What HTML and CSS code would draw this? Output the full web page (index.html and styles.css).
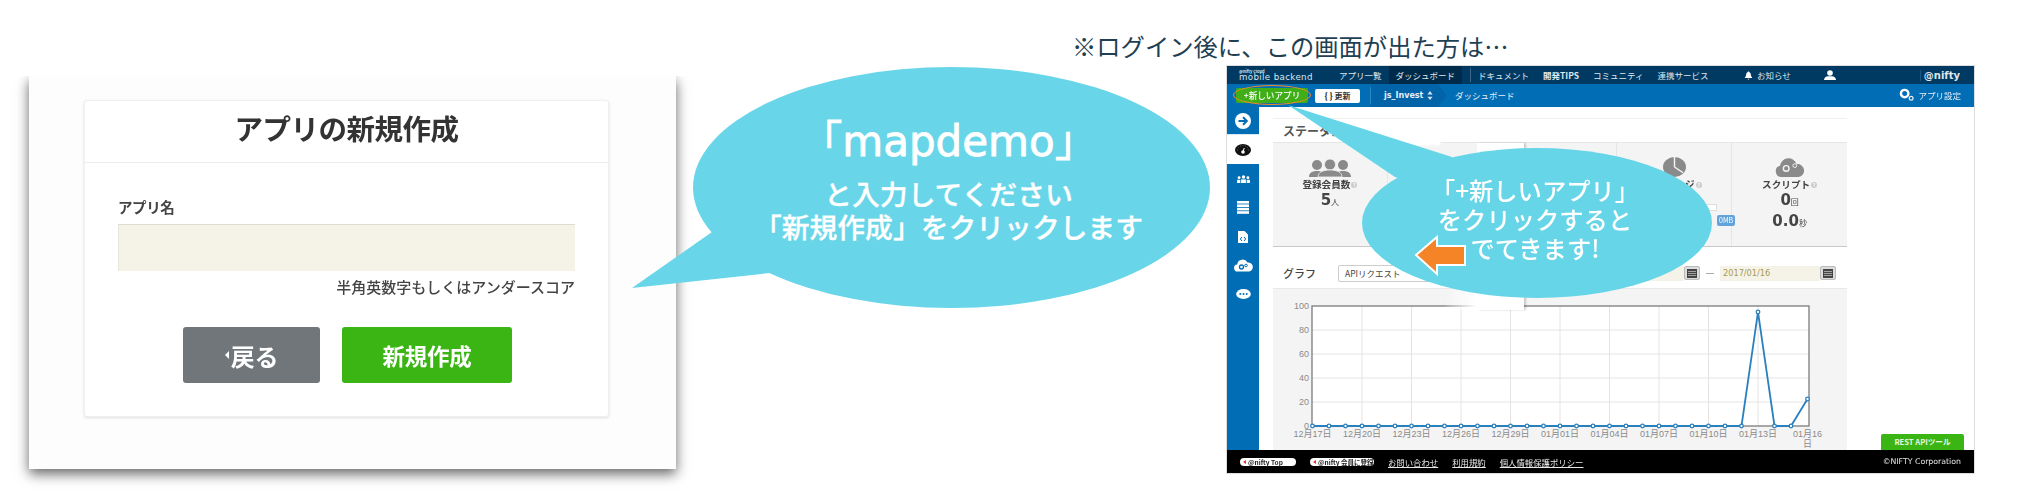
FILE: index.html
```html
<!DOCTYPE html>
<html lang="ja">
<head>
<meta charset="utf-8">
<title>アプリの新規作成</title>
<link rel="stylesheet" href="styles.css">
</head>
<body>
<div class="slide">

  <section class="form-window">
    <div class="form-card">
      <h1 class="form-title">アプリの新規作成</h1>
      <div class="form-body">
        <label class="form-label">アプリ名</label>
        <div class="form-input"></div>
        <p class="form-hint">半角英数字もしくはアンダースコア</p>
        <div class="form-actions">
          <span class="btn btn-back"><span class="btn-caret"></span><span class="btn-back-text">戻る</span></span>
          <span class="btn btn-create">新規作成</span>
        </div>
      </div>
    </div>
  </section>

  <div class="bubble bubble-map">
    <svg class="bubble-shape" viewBox="0 0 578 241" width="578" height="241">
      <ellipse cx="319.5" cy="120.5" rx="258.5" ry="120.5" fill="#68d6e8"/>
      <polygon points="0,221 80,165 200,120 138,206" fill="#68d6e8"/>
    </svg>
    <div class="bubble-map-text">
      <div class="map-name">「mapdemo」</div>
      <div class="map-line">と入力してください</div>
      <div class="map-line">「新規作成」をクリックします</div>
    </div>
  </div>

  <p class="note">※ログイン後に、この画面が出た方は…</p>

  <section class="screen">
    <header class="topnav">
      <div class="logo"><span class="logo-small">@nifty Cloud</span><span class="logo-main">mobile backend</span></div>
      <nav class="nav-items">
        <span class="nav-item">アプリ一覧</span>
        <span class="nav-item nav-active">ダッシュボード</span>
        <span class="nav-sep"></span>
        <span class="nav-item">ドキュメント</span>
        <span class="nav-item nav-bold">開発TIPS</span>
        <span class="nav-item">コミュニティ</span>
        <span class="nav-item">連携サービス</span>
      </nav>
      <div class="nav-right">
        <svg class="ico-bell" viewBox="0 0 10 10" width="9" height="9"><path d="M5 .5c.7 0 1 .5 1 1 1.4.5 1.6 2 1.7 3.300.1 1 .7 1.700 1.300 2.400v.6H1v-.6c.6-.7 1.200-1.400 1.300-2.400.1-1.300.3-2.800 1.700-3.300 0-.5.300-1 1-1zM4 8.700h2c0 .5-.4.9-1 .9s-1-.4-1-.9z" fill="#fff"/></svg>
        <span class="nav-notice">お知らせ</span>
        <svg class="ico-user" viewBox="0 0 12 10" width="12" height="10"><circle cx="6" cy="3" r="2.800" fill="#fff"/><path d="M0 10c0-2.500 2-3.500 4-3.800h4c2 .3 4 1.300 4 3.800z" fill="#fff"/></svg>
        <span class="nav-brand">@nifty</span>
      </div>
    </header>

    <div class="subnav">
      <span class="new-app">+新しいアプリ<span class="new-app-ring"></span></span>
      <span class="refresh"><b>{ }</b> 更新</span>
      <span class="sub-sep"></span>
      <span class="crumb-app">js_Invest <svg viewBox="0 0 8 12" width="6" height="9"><path d="M4 0l3.500 4.500h-7zM4 12L.5 7.500h7z" fill="#cfe0ee"/></svg></span>
      <span class="crumb">ダッシュボード</span>
      <span class="app-settings">
        <svg viewBox="0 0 16 14" width="15" height="13"><circle cx="6" cy="6" r="4" fill="none" stroke="#fff" stroke-width="2.600"/><circle cx="13" cy="11" r="2" fill="none" stroke="#dfe9f2" stroke-width="1.400"/></svg>
        アプリ設定
      </span>
    </div>

    <div class="workspace">
      <aside class="sidebar">
        <div class="side-cell side-first">
          <svg viewBox="0 0 16 16" width="16" height="16"><circle cx="8" cy="8" r="8" fill="#fff"/><path d="M3.500 8h8M8 4.300L11.800 8 8 11.700" fill="none" stroke="#016db5" stroke-width="2"/></svg>
        </div>
        <div class="side-cell side-active">
          <svg viewBox="0 0 16 12" width="16" height="12"><ellipse cx="8" cy="6" rx="8" ry="6" fill="#111"/><circle cx="8" cy="8" r="1.800" fill="#fff"/><path d="M8 8l1.200-4" stroke="#fff"/><path d="M2.500 6.500a5.500 5 0 0 1 11 0" fill="none" stroke="#777" stroke-width=".8" stroke-dasharray="1 1.500"/></svg>
        </div>
        <div class="side-cell">
          <svg viewBox="0 0 17 10" width="17" height="8" fill="#fff"><circle cx="8.500" cy="2.500" r="2.200"/><circle cx="3" cy="3.500" r="1.800"/><circle cx="14" cy="3.500" r="1.800"/><rect x="5.500" y="5.500" width="6" height="4.500"/><rect x=".5" y="6" width="4" height="4"/><rect x="12.500" y="6" width="4" height="4"/></svg>
        </div>
        <div class="side-cell">
          <svg viewBox="0 0 12 13" width="12" height="13" fill="#fff"><rect width="12" height="2.600"/><rect y="3.400" width="12" height="2.600"/><rect y="6.800" width="12" height="2.600"/><rect y="10.200" width="12" height="2.600"/></svg>
        </div>
        <div class="side-cell">
          <svg viewBox="0 0 10 12" width="10" height="12"><path d="M0 0h6.500L10 3.500V12H0z" fill="#fff"/><path d="M4 6L2.300 8 4 10M6 6l1.700 2L6 10" fill="none" stroke="#016db5"/></svg>
        </div>
        <div class="side-cell">
          <svg viewBox="0 0 19 12" width="19" height="13"><path d="M4 12a3.500 3.500 0 0 1-.8-7A5.500 5.500 0 0 1 13.500 3 4.500 4.500 0 0 1 15 12z" fill="#fff"/><circle cx="7.500" cy="7.500" r="2" fill="none" stroke="#016db5" stroke-width="1.300"/><circle cx="12" cy="6" r="1.300" fill="none" stroke="#016db5"/></svg>
        </div>
        <div class="side-cell">
          <svg viewBox="0 0 16 12" width="15" height="11"><ellipse cx="8" cy="5.500" rx="8" ry="5.500" fill="#fff"/><circle cx="4.500" cy="5.500" r="1.100" fill="#016db5"/><circle cx="8" cy="5.500" r="1.100" fill="#016db5"/><circle cx="11.500" cy="5.500" r="1.100" fill="#016db5"/></svg>
        </div>
      </aside>

      <main class="content">
        <div class="cards">
          <section class="panel stats">
            <h2 class="panel-head">ステータス</h2>
            <div class="stat-grid">
              <div class="stat">
                <div class="stat-ico"><svg viewBox="0 0 42 18" width="42" height="18" fill="#8a8a8a"><circle cx="8" cy="6" r="5"/><circle cx="34" cy="6" r="5"/><path d="M0 18c0-4 3-6 8-6s8 2 8 6zM26 18c0-4 3-6 8-6s8 2 8 6z"/><circle cx="21" cy="5.500" r="5.500" stroke="#f4f4f4" stroke-width=".8"/><path d="M9 18c0-5 5-7 12-7s12 2 12 7z" stroke="#f4f4f4" stroke-width=".8"/></svg></div>
                <div class="stat-label">登録会員数<i class="help">?</i></div>
                <div class="stat-value">5<small>人</small></div>
              </div>
              <div class="stat"></div>
              <div class="stat"></div>
              <div class="stat">
                <div class="stat-ico"><svg viewBox="0 0 24 24" width="23" height="20" preserveAspectRatio="none"><circle cx="12" cy="12" r="12" fill="#8a8a8a"/><path d="M12 12V0M12 12l9 7" stroke="#f4f4f4" stroke-width="1.500" fill="none"/></svg></div>
                <div class="stat-label">ストレージ<i class="help">?</i></div>
                <div class="usage-bar"></div>
                <div class="usage-badge">0MB</div>
              </div>
              <div class="stat">
                <div class="stat-ico"><svg viewBox="0 0 32 20" width="32" height="19"><path d="M7 20a6 6 0 0 1-1.500-11.800A9 9 0 0 1 23 6.500 6.800 6.800 0 0 1 25 20z" fill="#8a8a8a"/><circle cx="12" cy="11" r="3" fill="none" stroke="#f4f4f4" stroke-width="1.500"/><circle cx="21" cy="8" r="2" fill="none" stroke="#f4f4f4"/></svg></div>
                <div class="stat-label">スクリプト<i class="help">?</i></div>
                <div class="stat-value">0<small>回</small></div>
                <div class="stat-value">0.0<small>秒</small></div>
              </div>
            </div>
          </section>

          <section class="panel graph">
            <div class="graph-head">
              <h2 class="graph-title">グラフ</h2>
              <span class="graph-select">APIリクエスト</span>
              <span class="graph-dates">
                <span class="date-field"></span>
                <span class="cal"><svg viewBox="0 0 10 10" width="10" height="10"><path d="M0 1h10v9H0z" fill="#444"/><path d="M1 3.500h8M1 5.500h8M1 7.500h8" stroke="#ccc" stroke-width=".7"/></svg></span>
                <span class="date-dash"></span>
                <span class="date-field date-to">2017/01/16</span>
                <span class="cal"><svg viewBox="0 0 10 10" width="10" height="10"><path d="M0 1h10v9H0z" fill="#444"/><path d="M1 3.500h8M1 5.500h8M1 7.500h8" stroke="#ccc" stroke-width=".7"/></svg></span>
              </span>
            </div>
            <div class="graph-body">
              <svg class="chart" viewBox="0 0 574 161" width="574" height="161">
                <rect x="39" y="17" width="497" height="120" fill="#fff"/>
                <g stroke="#e4e4e4" fill="none">
                  <path d="M39 41h497M39 65h497M39 89h497M39 113h497"/>
                  <path d="M89 17v120M138.500 17v120M188 17v120M237.500 17v120M287 17v120M336.500 17v120M386 17v120M435.500 17v120M485 17v120"/>
                </g>
                <rect x="39" y="17" width="497" height="120" fill="none" stroke="#707070" stroke-width="1.200"/>
                <g class="chart-y" text-anchor="end">
                  <text x="36" y="20">100</text><text x="36" y="44">80</text><text x="36" y="68">60</text><text x="36" y="92">40</text><text x="36" y="116">20</text><text x="36" y="140">0</text>
                </g>
                <g class="chart-x" text-anchor="middle">
                  <text x="39.500" y="148">12月17日</text><text x="89" y="148">12月20日</text><text x="138.500" y="148">12月23日</text><text x="188" y="148">12月26日</text><text x="237.500" y="148">12月29日</text><text x="287" y="148">01月01日</text><text x="336.500" y="148">01月04日</text><text x="386" y="148">01月07日</text><text x="435.500" y="148">01月10日</text><text x="485" y="148">01月13日</text><text x="534.500" y="148">01月16</text><text x="534.500" y="158">日</text>
                </g>
                <polyline points="39.500,137 468.500,137 485,23 501.500,137 518,137 534.500,110" fill="none" stroke="#2a80bd" stroke-width="1.800"/>
                <g fill="#fff" stroke="#2a80bd" stroke-width="1.300">
                  <circle cx="39.500" cy="137" r="1.800"/><circle cx="56" cy="137" r="1.800"/><circle cx="72.500" cy="137" r="1.800"/><circle cx="89" cy="137" r="1.800"/><circle cx="105.500" cy="137" r="1.800"/><circle cx="122" cy="137" r="1.800"/><circle cx="138.500" cy="137" r="1.800"/><circle cx="155" cy="137" r="1.800"/><circle cx="171.500" cy="137" r="1.800"/><circle cx="188" cy="137" r="1.800"/><circle cx="204.500" cy="137" r="1.800"/><circle cx="221" cy="137" r="1.800"/><circle cx="237.500" cy="137" r="1.800"/><circle cx="254" cy="137" r="1.800"/><circle cx="270.500" cy="137" r="1.800"/><circle cx="287" cy="137" r="1.800"/><circle cx="303.500" cy="137" r="1.800"/><circle cx="320" cy="137" r="1.800"/><circle cx="336.500" cy="137" r="1.800"/><circle cx="353" cy="137" r="1.800"/><circle cx="369.500" cy="137" r="1.800"/><circle cx="386" cy="137" r="1.800"/><circle cx="402.500" cy="137" r="1.800"/><circle cx="419" cy="137" r="1.800"/><circle cx="435.500" cy="137" r="1.800"/><circle cx="452" cy="137" r="1.800"/><circle cx="468.500" cy="137" r="1.800"/><circle cx="485" cy="23" r="1.800"/><circle cx="501.500" cy="137" r="1.800"/><circle cx="518" cy="137" r="1.800"/><circle cx="534.500" cy="110" r="1.800"/>
                </g>
              </svg>
            </div>
          </section>
        </div>
        <div class="side-actions"><span class="rest-btn">REST APIツール</span></div>
      </main>
      <div class="patch patch-a"></div>
      <div class="patch patch-b"></div>
      <div class="patch patch-c"></div>
    </div>

    <footer class="footer">
      <span class="pill pill-top"><i></i>@nifty Top</span>
      <span class="pill pill-join"><i></i>@nifty 会員に登録</span>
      <a class="foot-link">お問い合わせ</a>
      <a class="foot-link">利用規約</a>
      <a class="foot-link">個人情報保護ポリシー</a>
      <span class="copyright">©NIFTY Corporation</span>
    </footer>
  </section>

  <div class="bubble bubble-new">
    <svg class="bubble-shape" viewBox="0 0 424 193" width="424" height="193">
      <ellipse cx="249" cy="118" rx="175" ry="75" fill="#66d5e8"/>
      <polygon points="0,0 164,52 200,100 107,72" fill="#66d5e8"/>
      <polygon points="128,150 149,132 149,141 177,141 177,160 149,160 149,169" fill="#f58426" stroke="#fff" stroke-width="2"/>
    </svg>
    <div class="bubble-new-text">
      <div>「+新しいアプリ」</div>
      <div>をクリックすると</div>
      <div>でてきます!</div>
    </div>
  </div>

</div>
</body>
</html>
```

FILE: styles.css
```css
* { box-sizing: border-box; }

html, body {
  margin: 0;
  padding: 0;
  background: #fff;
}

body {
  font-family: "Noto Sans CJK JP", "Liberation Sans", sans-serif;
  overflow: hidden;
}

.slide {
  position: relative;
  width: 2025px;
  height: 500px;
  overflow: hidden;
}

/* ---------- left window ---------- */
.form-window {
  position: absolute;
  left: 29px;
  top: 76px;
  width: 647px;
  height: 393px;
  padding: 24px 67px 0 55px;
  background: #fdfdfd;
  box-shadow: 0 5px 12px rgba(0, 0, 0, .6);
  clip-path: inset(0 -30px -30px -30px);
  filter: blur(.35px);
}

.form-card {
  height: 317px;
  background: #fff;
  border: 1px solid #f0f0f0;
  border-radius: 3px;
  box-shadow: 0 1px 3px rgba(0, 0, 0, .12);
}

.form-title {
  height: 62px;
  margin: 0;
  border-bottom: 1px solid #ececec;
  color: #333;
  font-size: 28.500px;
  font-weight: 700;
  line-height: 54px;
  letter-spacing: -.5px;
  text-align: center;
}

.form-body {
  display: flex;
  flex-direction: column;
  padding: 35px 33px 0 33px;
}

.form-label {
  color: #444;
  font-size: 14.500px;
  font-weight: 700;
  line-height: 18px;
  letter-spacing: -.4px;
}

.form-input {
  height: 47px;
  margin-top: 8px;
  background: #f5f3e7;
  border-top: 1px solid #dedcd2;
  border-left: 1px solid #e8e6dc;
}

.form-hint {
  margin: 5px 0 0;
  color: #444;
  font-size: 15px;
  font-weight: 500;
  line-height: 22px;
  text-align: right;
}

.form-actions {
  display: flex;
  gap: 22px;
  margin: 29px 0 0 65px;
}

.btn {
  display: flex;
  align-items: center;
  justify-content: center;
  height: 56px;
  border-radius: 3px;
  color: #fff;
  font-size: 22.500px;
  font-weight: 700;
  letter-spacing: -.3px;
}

.btn-back {
  width: 137px;
  background: #71767a;
}

.btn-back-text {
  font-size: 24px;
}

.btn-caret {
  width: 0;
  height: 0;
  margin-right: 2px;
  border-top: 4px solid transparent;
  border-bottom: 4px solid transparent;
  border-right: 4px solid #fff;
}

.btn-create {
  width: 170px;
  background: #3ab514;
}

/* ---------- speech bubbles ---------- */
.bubble {
  position: absolute;
  color: #fff;
}

.bubble-shape {
  display: block;
  position: absolute;
  left: 0;
  top: 0;
}

.bubble-map {
  left: 632px;
  top: 67px;
  width: 578px;
  height: 241px;
}

.bubble-map-text {
  position: absolute;
  left: 58px;
  top: 46px;
  width: 517px;
  text-align: center;
  font-weight: 700;
}

.map-name {
  font-family: "DejaVu Sans", "Noto Sans CJK JP", sans-serif;
  font-size: 42px;
  font-weight: 400;
  -webkit-text-stroke: .8px #fff;
  line-height: 58px;
  margin-bottom: 6px;
}

.map-line {
  font-size: 27.800px;
  font-weight: 500;
  -webkit-text-stroke: .3px #fff;
  line-height: 32.500px;
}

.bubble-new {
  left: 1288px;
  top: 105px;
  width: 424px;
  height: 193px;
}

.bubble-new-text {
  position: absolute;
  left: 72px;
  top: 70px;
  width: 350px;
  font-size: 24.300px;
  font-weight: 500;
  line-height: 29px;
  text-align: center;
}

/* ---------- note ---------- */
.note {
  position: absolute;
  left: 1072px;
  top: 28px;
  margin: 0;
  color: #1f4053;
  font-size: 24.300px;
  line-height: 36px;
  white-space: nowrap;
}

/* ---------- right screenshot ---------- */
.screen {
  position: absolute;
  left: 1227px;
  top: 66px;
  display: flex;
  flex-direction: column;
  width: 747px;
  height: 407px;
  background: #fff;
  outline: 1px solid #ddd;
  filter: blur(.55px);
  color: #444;
}

.topnav {
  display: flex;
  align-items: center;
  flex: 0 0 18px;
  padding: 0 14px 0 12px;
  background: #003a63;
  color: #dfe8ef;
  font-size: 8.500px;
}

.logo {
  display: flex;
  flex-direction: column;
  width: 71px;
  color: #dce6ee;
  line-height: 1;
}

.logo-small {
  font-size: 4px;
  font-weight: 700;
}

.logo-main {
  font-family: "DejaVu Sans", sans-serif;
  font-size: 8.700px;
  letter-spacing: .35px;
  white-space: nowrap;
}

.nav-items {
  display: flex;
  align-items: stretch;
  align-self: stretch;
  margin-left: 22px;
}

.nav-item {
  display: flex;
  align-items: center;
  padding: 0 7px;
  white-space: nowrap;
}

.nav-active {
  background: #002a4a;
}

.nav-bold {
  font-weight: 700;
}

.nav-sep {
  width: 1px;
  margin: 2px 0 2px 8px;
  background: #3d6a8c;
}

.nav-right {
  display: flex;
  align-items: center;
  margin-left: auto;
}

.nav-notice {
  margin: 0 33px 0 4px;
}

.nav-brand {
  margin-left: 84px;
  padding-left: 3px;
  border-left: 1px solid #1e5680;
  color: #dfe8ef;
  font-family: "DejaVu Sans", sans-serif;
  font-size: 10px;
  font-weight: 700;
}

.subnav {
  display: flex;
  align-items: center;
  flex: 0 0 23px;
  padding: 0 13px 0 9px;
  background: #016db5;
  color: #e4eef6;
  font-size: 8.500px;
}

.new-app {
  position: relative;
  width: 72px;
  height: 15px;
  background: #3fae18;
  border-radius: 2px;
  color: #fff;
  font-size: 8.600px;
  font-weight: 500;
  line-height: 15px;
  text-align: center;
  white-space: nowrap;
}

.new-app-ring {
  position: absolute;
  left: -3px;
  top: -3px;
  width: 78px;
  height: 20px;
  border: 1.500px solid #f08a24;
  border-radius: 50%;
}

.refresh {
  width: 45px;
  height: 14px;
  margin-left: 7px;
  background: #fff;
  border-radius: 2px;
  color: #333;
  font-size: 8px;
  font-weight: 700;
  line-height: 14px;
  text-align: center;
}

.sub-sep {
  align-self: stretch;
  width: 1px;
  margin: 3px 0 3px 10px;
  background: #2c86c2;
}

.crumb-app {
  display: flex;
  align-items: center;
  gap: 4px;
  height: 23px;
  width: 76px;
  padding-left: 13px;
  background: #0264a8;
  clip-path: polygon(0 0, 88% 0, 100% 50%, 88% 100%, 0 100%);
  color: #e4eef6;
  font-family: "DejaVu Sans", sans-serif;
  font-size: 8px;
  font-weight: 700;
  white-space: nowrap;
}

.crumb {
  margin: 0 0 2px 8px;
}

.app-settings {
  display: flex;
  align-items: center;
  gap: 4px;
  margin: 0 0 2px auto;
}

.workspace {
  position: relative;
  display: flex;
  flex: 1 1 auto;
  min-height: 0;
}

.sidebar {
  display: flex;
  flex-direction: column;
  flex: 0 0 32px;
  background: #016db5;
}

.side-cell {
  display: flex;
  align-items: center;
  justify-content: center;
  height: 29px;
}

.side-first {
  height: 28px;
  border-bottom: 1px solid #d8e8f3;
}

.side-active {
  background: #fff;
}

.content {
  display: flex;
  flex: 1 1 auto;
  min-width: 0;
  padding-left: 14px;
}

.cards {
  display: flex;
  flex-direction: column;
  flex: 0 0 574px;
  gap: 11px;
  padding-top: 11px;
}

.panel {
  background: #fff;
}

.stats {
  flex: 0 0 129px;
  display: flex;
  flex-direction: column;
  border-top: 1px solid #f0f0f0;
}

.panel-head {
  flex: 0 0 24px;
  margin: 0;
  padding-left: 10px;
  border-bottom: 1px solid #e6e6e6;
  color: #555;
  font-size: 12px;
  font-weight: 700;
  line-height: 23px;
}

.stat-grid {
  display: grid;
  flex: 1 1 auto;
  grid-template-columns: repeat(5, 1fr);
  background: #f4f4f4;
  border-bottom: 1px solid #c9c9c9;
}

.stat {
  display: flex;
  flex-direction: column;
  align-items: center;
  position: relative;
  padding-top: 14px;
  border-right: 1px solid #e6e6e6;
}

.stat:last-child {
  border-right: 0;
}

.stat-ico {
  display: flex;
  align-items: flex-end;
  height: 20px;
}

.stat-label {
  color: #444;
  font-size: 9.600px;
  font-weight: 700;
  line-height: 14px;
  white-space: nowrap;
}

.help {
  display: inline-block;
  width: 6px;
  height: 6px;
  margin-left: 1px;
  border-radius: 50%;
  background: #ccc;
  color: #fff;
  font-size: 5px;
  font-style: normal;
  line-height: 6px;
  text-align: center;
  vertical-align: middle;
}

.stat-value {
  color: #444;
  font-family: "DejaVu Sans", "Noto Sans CJK JP", sans-serif;
  font-size: 15px;
  font-weight: 700;
  line-height: 18px;
}

.stat-value small {
  font-size: 8px;
  font-weight: 400;
}

.usage-bar {
  width: 86px;
  height: 7px;
  margin-top: 13px;
  background: #fff;
  border: 1px solid #ddd;
}

.usage-badge {
  align-self: flex-end;
  height: 11px;
  margin: 4px -4px 0 0;
  padding: 0 2px;
  background: #62a3dc;
  border-radius: 2px;
  color: #fff;
  font-size: 7px;
  line-height: 11px;
}

.graph {
  display: flex;
  flex-direction: column;
  flex: 1 1 auto;
  min-height: 0;
}

.graph-head {
  display: flex;
  align-items: center;
  flex: 0 0 31px;
  padding: 0 11px 0 10px;
  border-bottom: 1px solid #e8e8e8;
}

.graph-title {
  width: 55px;
  margin: 0;
  color: #444;
  font-size: 11px;
  font-weight: 500;
}

.graph-select {
  width: 105px;
  height: 17px;
  padding-left: 6px;
  background: #fff;
  border: 1px solid #ccc;
  border-radius: 2px;
  color: #444;
  font-size: 8.500px;
  line-height: 15px;
}

.graph-dates {
  display: flex;
  align-items: center;
  margin-left: auto;
}

.date-field {
  display: block;
  width: 100px;
  height: 15px;
  padding-left: 3px;
  background: #f5f3e7;
  color: #a69a55;
  font-family: "DejaVu Sans", sans-serif;
  font-size: 8.200px;
  line-height: 15px;
}

.cal {
  display: flex;
  align-items: center;
  justify-content: center;
  width: 16px;
  height: 14px;
  background: #ddd;
  border: 1px solid #bbb;
  border-radius: 2px;
}

.date-dash {
  width: 8px;
  height: 1px;
  margin: 0 6px;
  background: #aaa;
}

.graph-body {
  flex: 1 1 auto;
  min-height: 0;
  background: #f4f4f4;
}

.chart {
  display: block;
}

.chart-y text,
.chart-x text {
  fill: #8a8a8a;
  font-family: "Liberation Sans", "Noto Sans CJK JP", sans-serif;
  font-size: 9px;
}

.side-actions {
  display: flex;
  flex: 1 1 auto;
  align-items: flex-end;
  justify-content: flex-start;
  padding-left: 34px;
}

.rest-btn {
  width: 83px;
  height: 16px;
  background: #3ab514;
  border-radius: 2px 2px 0 0;
  color: #e9f8e2;
  font-size: 7.600px;
  font-weight: 700;
  line-height: 16px;
  text-align: center;
  white-space: nowrap;
}

/* leftovers of the collage that sit behind the bubble */
.patch {
  position: absolute;
  background: #fff;
}

.patch-a {
  left: 250px;
  top: 36px;
  width: 47px;
  height: 167px;
  box-shadow: 2px 0 2px rgba(0, 0, 0, .18);
}

.patch-b {
  left: 153px;
  top: 26px;
  width: 60px;
  height: 12px;
  box-shadow: 0 0 4px #fff;
}

.patch-c {
  left: 216px;
  top: 183px;
  width: 34px;
  height: 20px;
  background: linear-gradient(to right, rgba(255, 255, 255, 0), #fff);
}

.footer {
  display: flex;
  align-items: center;
  flex: 0 0 23px;
  padding: 0 13px;
  background: #000;
  color: #e8e8e8;
  font-size: 8.400px;
}

.pill {
  display: flex;
  align-items: center;
  height: 8px;
  padding: 0 3px;
  background: #fff;
  border-radius: 4px;
  color: #222;
  font-size: 6.500px;
  font-weight: 700;
  white-space: nowrap;
}

.pill i {
  width: 0;
  height: 0;
  margin-right: 2px;
  border-top: 2.500px solid transparent;
  border-bottom: 2.500px solid transparent;
  border-right: 3px solid #e03a2a;
}

.pill-top {
  width: 56px;
}

.pill-join {
  width: 64px;
  margin-left: 14px;
}

.foot-link {
  margin-left: 14px;
  text-decoration: underline;
  white-space: nowrap;
}

.copyright {
  margin-left: auto;
  font-family: "DejaVu Sans", sans-serif;
  font-size: 7.800px;
  white-space: nowrap;
}
```
